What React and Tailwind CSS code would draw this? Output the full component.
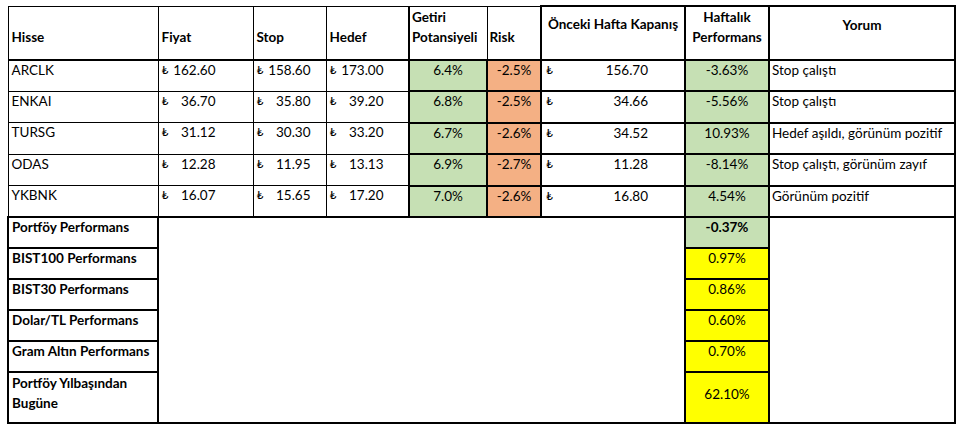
import React from 'react';

const rows = [
  { hisse: 'ARCLK', fiyat: '162.60', stop: '158.60', hedef: '173.00', getiri: '6.4%', risk: '-2.5%', onceki: '156.70', haftalik: '-3.63%', yorum: 'Stop çalıştı' },
  { hisse: 'ENKAI', fiyat: '36.70', stop: '35.80', hedef: '39.20', getiri: '6.8%', risk: '-2.5%', onceki: '34.66', haftalik: '-5.56%', yorum: 'Stop çalıştı' },
  { hisse: 'TURSG', fiyat: '31.12', stop: '30.30', hedef: '33.20', getiri: '6.7%', risk: '-2.6%', onceki: '34.52', haftalik: '10.93%', yorum: 'Hedef aşıldı, görünüm pozitif' },
  { hisse: 'ODAS', fiyat: '12.28', stop: '11.95', hedef: '13.13', getiri: '6.9%', risk: '-2.7%', onceki: '11.28', haftalik: '-8.14%', yorum: 'Stop çalıştı, görünüm zayıf' },
  { hisse: 'YKBNK', fiyat: '16.07', stop: '15.65', hedef: '17.20', getiri: '7.0%', risk: '-2.6%', onceki: '16.80', haftalik: '4.54%', yorum: 'Görünüm pozitif' },
];

const summary = [
  { label: 'BIST100 Performans', value: '0.97%' },
  { label: 'BIST30 Performans', value: '0.86%' },
  { label: 'Dolar/TL Performans', value: '0.60%' },
  { label: 'Gram Altın Performans', value: '0.70%' },
];

function Money({ value }) {
  return (
    <div className="flex items-center">
      <span className="w-[10px] text-[12px]">₺</span>
      <span className="w-[44px] text-right">{value}</span>
    </div>
  );
}

export default function App() {
  const thin = 'border border-black';
  const thick = 'border-2 border-black';
  return (
    <div className="bg-white w-[966px] h-[426px] pt-[5px] pl-[7px] text-black text-[13.5px] font-['Lato','Open_Sans',sans-serif]">
      <table className="table-fixed border-collapse w-[947px]">
        <colgroup>
          <col className="w-[150px]" />
          <col className="w-[95px]" />
          <col className="w-[73px]" />
          <col className="w-[83px]" />
          <col className="w-[78px]" />
          <col className="w-[54px]" />
          <col className="w-[144px]" />
          <col className="w-[84px]" />
          <col className="w-[186px]" />
        </colgroup>
        <thead>
          <tr className="h-[51px] font-bold leading-[20px]">
            <th className={`${thin} border-b-2 text-left align-bottom pb-[12px] px-[3px]`}>Hisse</th>
            <th className={`${thin} border-b-2 text-left align-bottom pb-[12px] px-[3px]`}>Fiyat</th>
            <th className={`${thin} border-b-2 text-left align-bottom pb-[12px] px-[3px]`}>Stop</th>
            <th className={`${thin} border-b-2 text-left align-bottom pb-[12px] px-[3px]`}>Hedef</th>
            <th className={`${thin} border-b-2 border-l-2 text-left align-bottom pb-[12px] px-[2px]`}>Getiri Potansiyeli</th>
            <th className={`${thin} border-b-2 text-left align-bottom pb-[12px] px-[2px]`}>Risk</th>
            <th className={`${thick} text-center align-top pt-[7px] px-[2px]`}>Önceki Hafta Kapanış</th>
            <th className={`${thick} text-center align-top pt-0 px-[2px]`}>Haftalık Performans</th>
            <th className={`${thick} text-center align-top pt-[8px] px-[2px]`}>Yorum</th>
          </tr>
        </thead>
        <tbody className="leading-[18px]">
          {rows.map((r) => (
            <tr key={r.hisse} className="h-[31.5px]">
              <td className={`${thin} align-top pt-0 px-[3px]`}>{r.hisse}</td>
              <td className={`${thin} align-top pt-0 px-[3px]`}><Money value={r.fiyat} /></td>
              <td className={`${thin} align-top pt-0 px-[3px]`}><Money value={r.stop} /></td>
              <td className={`${thin} align-top pt-0 px-[3px]`}><Money value={r.hedef} /></td>
              <td className={`${thick} align-top pt-0 text-center bg-[#c6e0b4]`}>{r.getiri}</td>
              <td className={`${thick} align-top pt-0 text-center bg-[#f4b084]`}>{r.risk}</td>
              <td className={`${thick} align-top pt-0 px-[4px]`}>
                <div className="flex items-center justify-between pr-[32px]">
                  <span className="text-[12px]">₺</span>
                  <span>{r.onceki}</span>
                </div>
              </td>
              <td className={`${thick} align-top pt-0 text-center bg-[#c6e0b4]`}>{r.haftalik}</td>
              <td className={`${thick} align-top pt-0 px-[2px] whitespace-nowrap`}>{r.yorum}</td>
            </tr>
          ))}
          <tr className="h-[31px]">
            <td className={`${thick} align-top pt-0 px-[3px] font-bold`}>Portföy Performans</td>
            <td colSpan={6} rowSpan={6} className={`${thick}`}></td>
            <td className={`${thick} align-top pt-0 text-center font-bold bg-[#c6e0b4]`}>-0.37%</td>
            <td rowSpan={6} className={`${thick}`}></td>
          </tr>
          {summary.map((s) => (
            <tr key={s.label} className="h-[31px]">
              <td className={`${thick} align-top pt-0 px-[3px] font-bold`}>{s.label}</td>
              <td className={`${thick} align-top pt-0 text-center bg-[#ffff00]`}>{s.value}</td>
            </tr>
          ))}
          <tr className="h-[51px]">
            <td className={`${thick} align-top pt-0 px-[3px] font-bold leading-[20px]`}>Portföy Yılbaşından Bugüne</td>
            <td className={`${thick} align-middle pb-[8px] text-center bg-[#ffff00]`}>62.10%</td>
          </tr>
        </tbody>
      </table>
    </div>
  );
}
